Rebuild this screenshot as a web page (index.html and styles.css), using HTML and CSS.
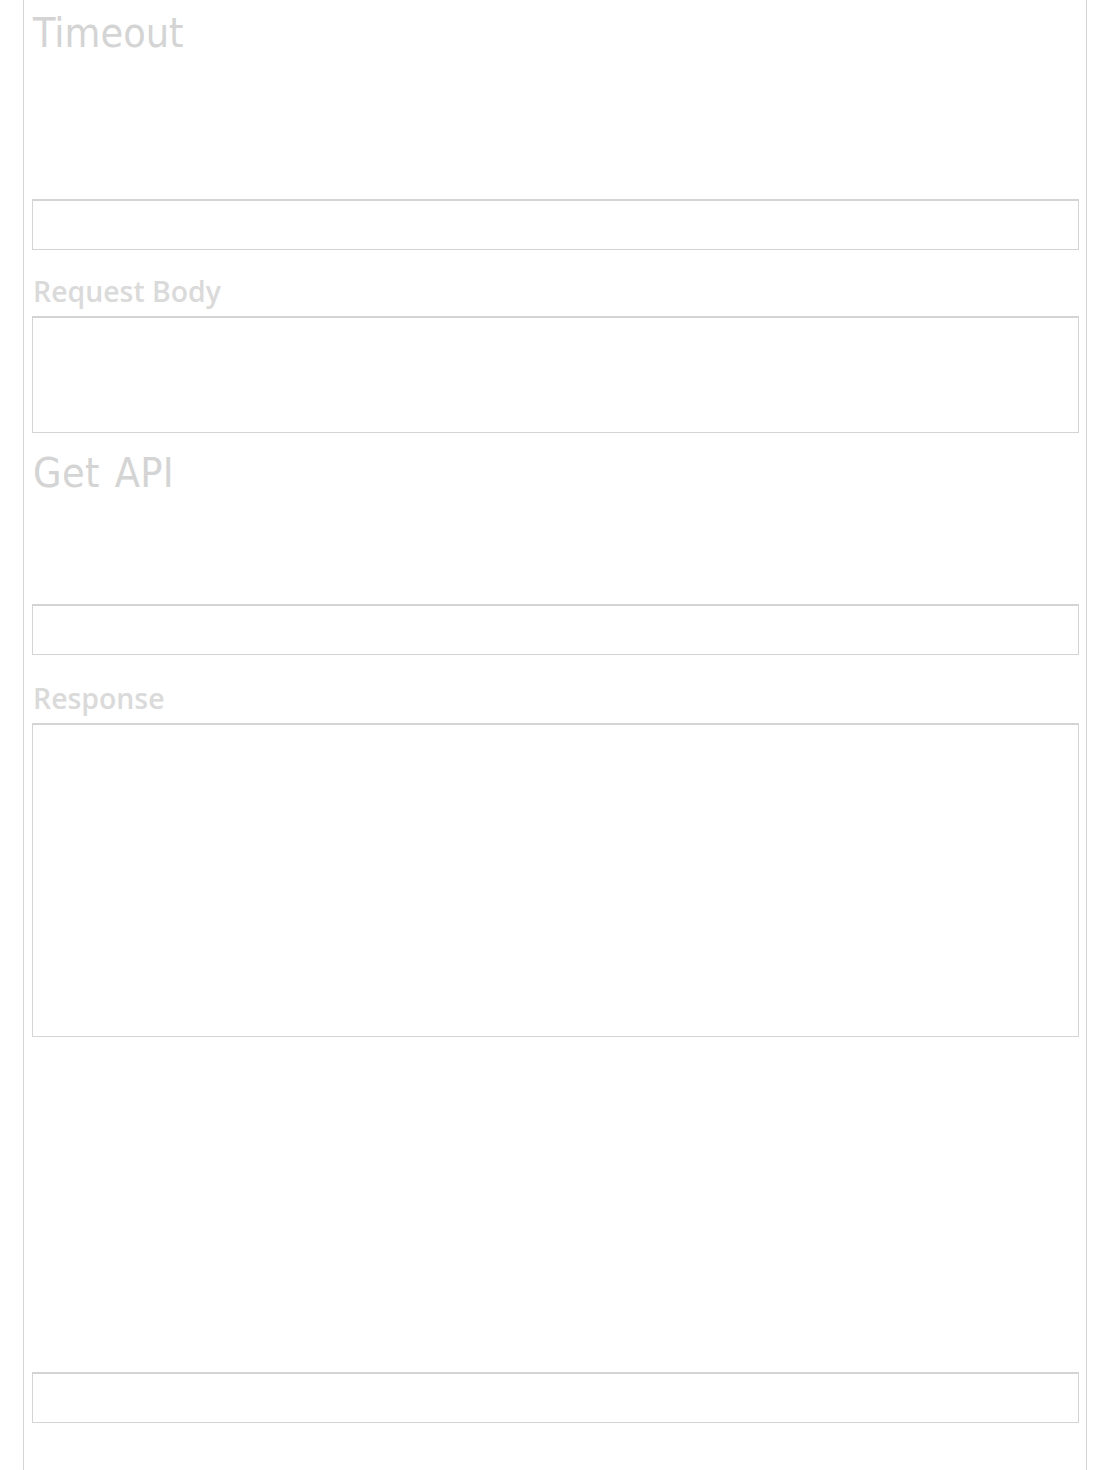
FILE: index.html
```html
<!DOCTYPE html>
<html lang="en">
<head>
<meta charset="utf-8">
<title>API Settings</title>
<link rel="stylesheet" href="styles.css">
</head>
<body>
<div class="panel">
  <h2 class="title title-timeout">Timeout</h2>
  <input class="field field-timeout" type="text">
  <label class="label label-body">Request Body</label>
  <textarea class="area area-body"></textarea>
  <h2 class="title title-api">Get API</h2>
  <input class="field field-api" type="text">
  <label class="label label-response">Response</label>
  <textarea class="area area-response"></textarea>
  <input class="field field-last" type="text">
</div>
</body>
</html>
```

FILE: styles.css
```css
html, body {
  margin: 0;
  padding: 0;
  background: #ffffff;
}

.panel {
  box-sizing: border-box;
  width: 1064px;
  min-height: 1470px;
  margin-left: 23px;
  padding: 0 7px 0 8px;
  border-left: 1px solid #d4d4d4;
  border-right: 1px solid #d4d4d4;
  display: flex;
  flex-direction: column;
  align-items: stretch;
}

.title {
  margin: 0;
  font-family: "DejaVu Sans Condensed", "DejaVu Sans", sans-serif;
  font-weight: normal;
  font-size: 41px;
  line-height: 46px;
  color: #d4d4d4;
  padding-left: 1px;
}

.title-timeout { margin-top: 10px; margin-bottom: 143px; }
.title-api { margin-top: 17px; margin-bottom: 108px; word-spacing: 3px; letter-spacing: 0.3px; }

.label {
  display: block;
  font-family: "Open Sans", "Liberation Sans", sans-serif;
  font-weight: 600;
  font-size: 28.4px;
  line-height: 38px;
  color: #dadada;
  padding-left: 1px;
  margin-bottom: 6px;
}

.label-body { margin-top: 22px; }
.label-response { margin-top: 24px; }

.field {
  box-sizing: border-box;
  display: block;
  width: 100%;
  height: 51px;
  margin: 0;
  padding: 0;
  border: 1px solid #d4d4d4;
  border-top-width: 2px;
  background: #ffffff;
  outline: none;
}

.area {
  box-sizing: border-box;
  display: block;
  width: 100%;
  margin: 0;
  padding: 0;
  border: 1px solid #d4d4d4;
  border-top-width: 2px;
  background: #ffffff;
  resize: none;
  outline: none;
}

.area-body { height: 117px; }
.area-response { height: 314px; }

.field-last { margin-top: 335px; }
```
